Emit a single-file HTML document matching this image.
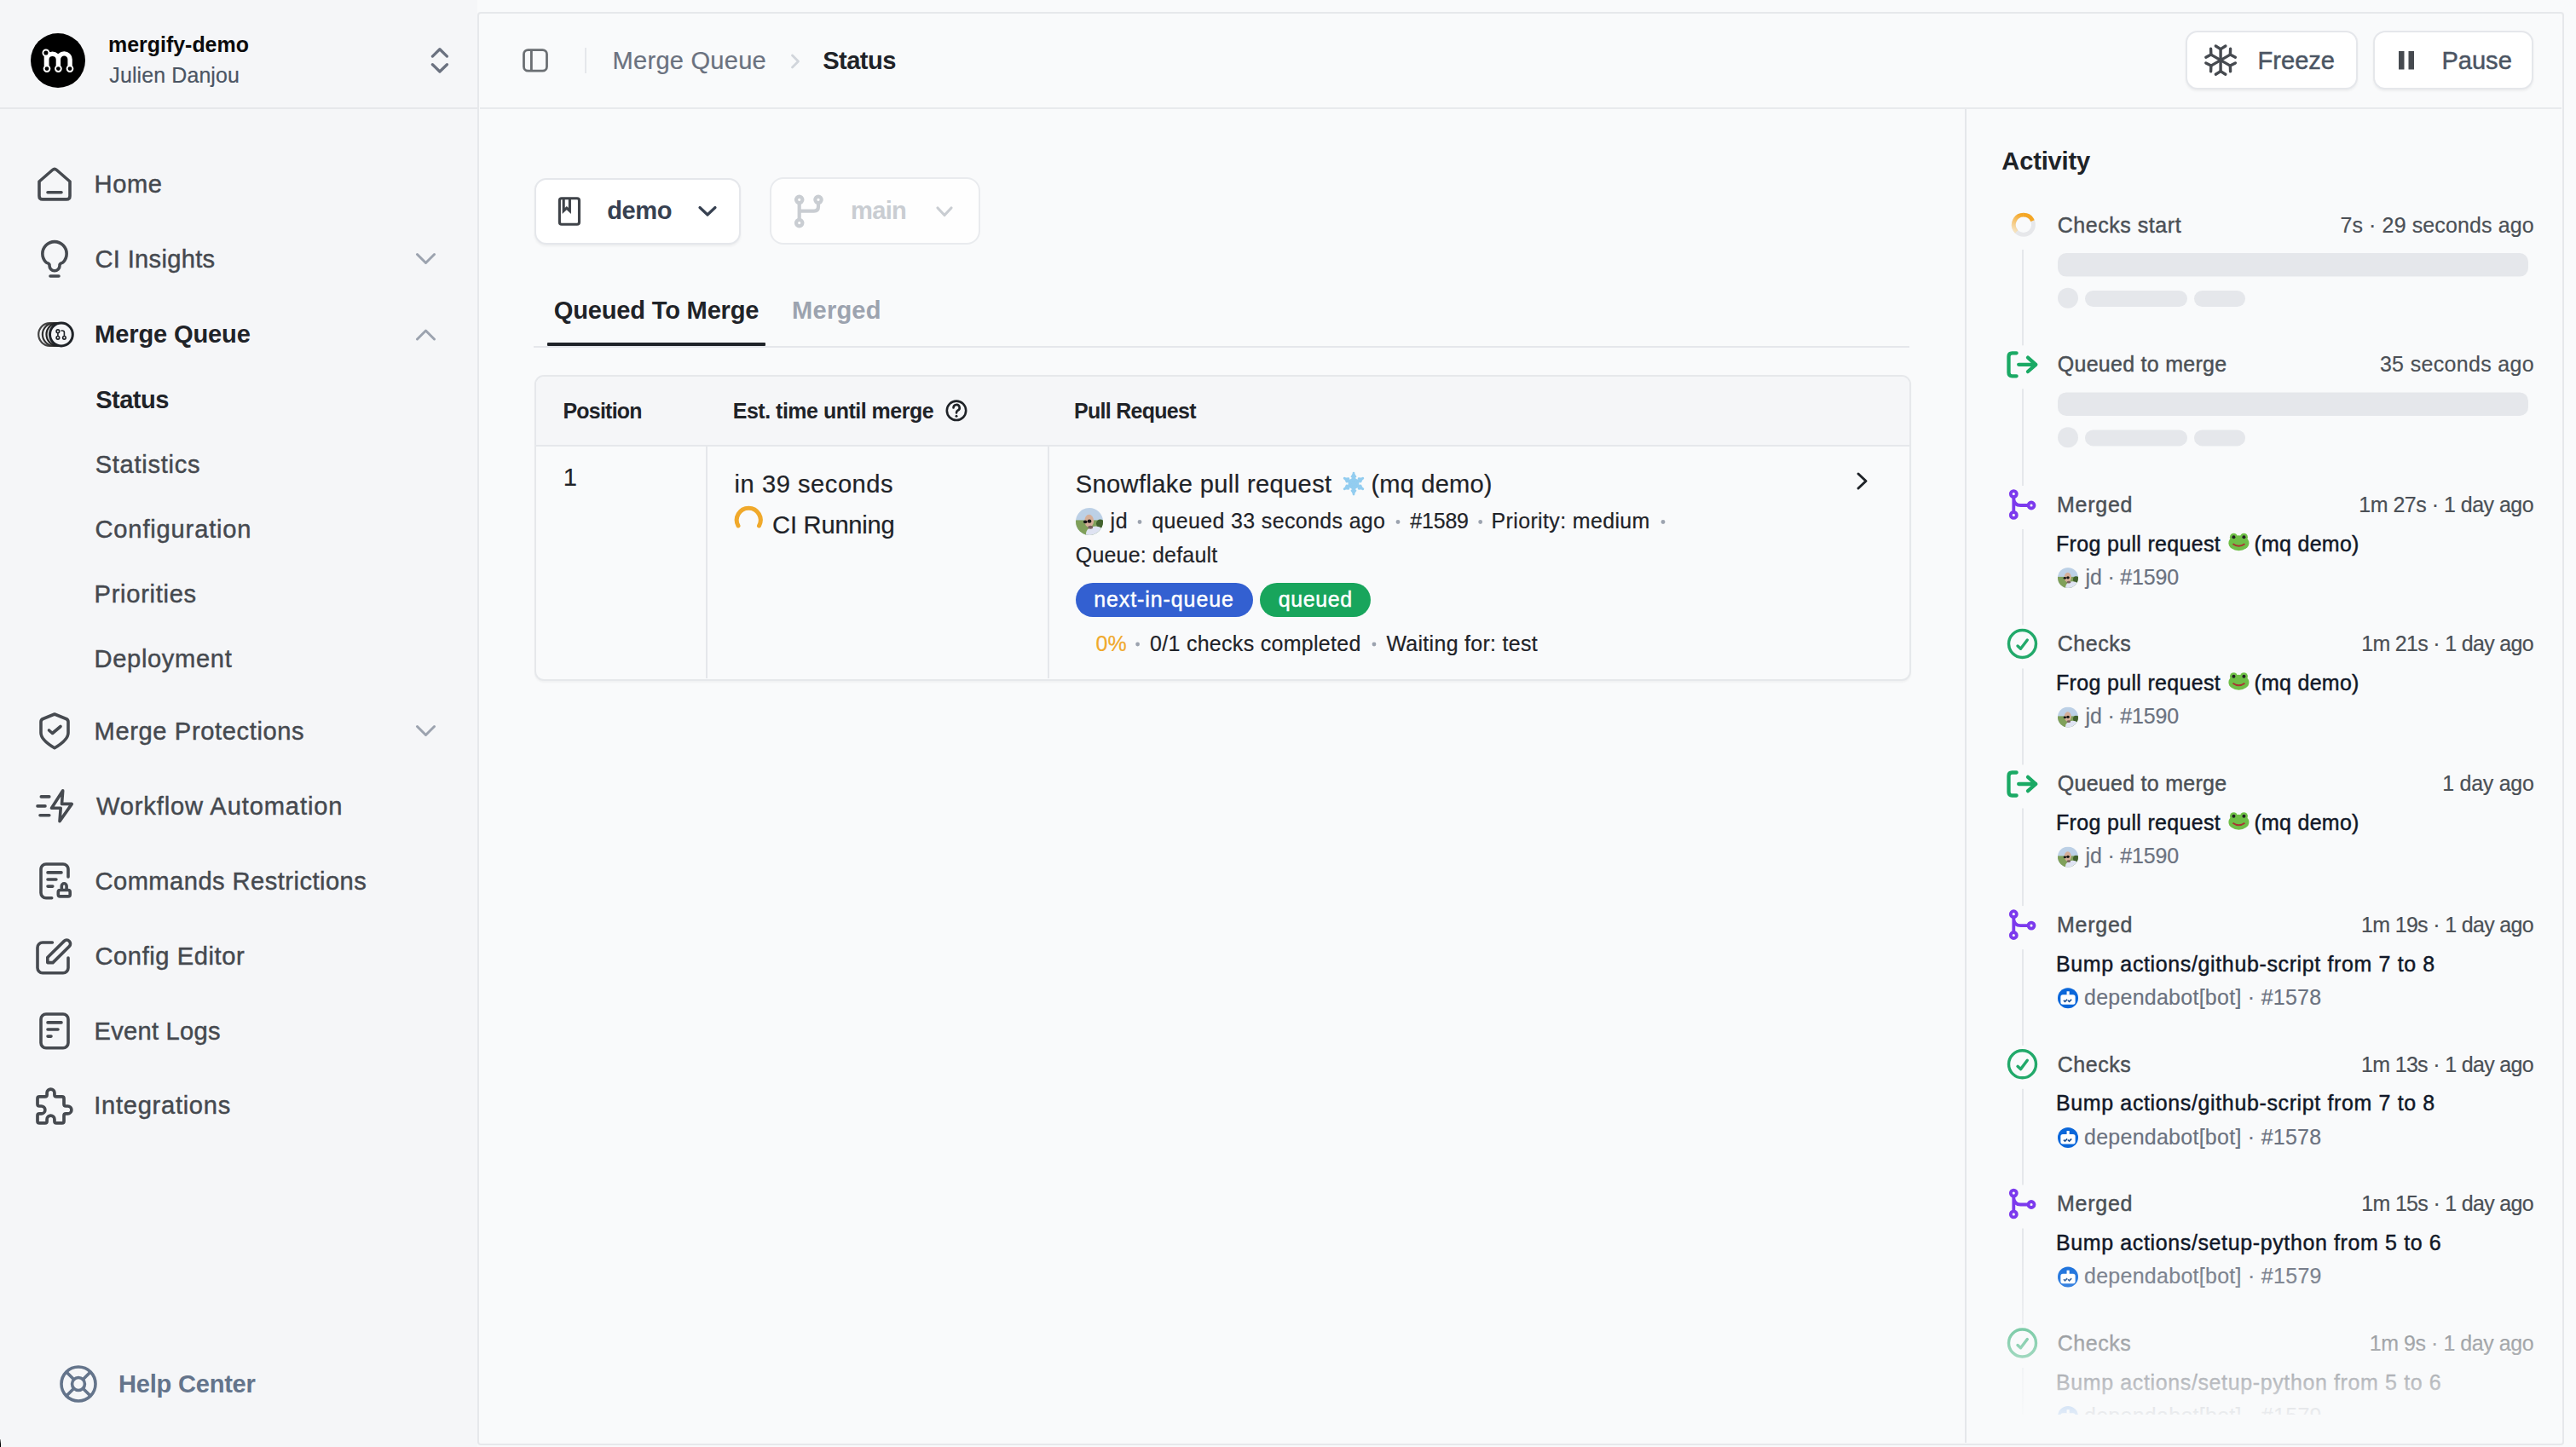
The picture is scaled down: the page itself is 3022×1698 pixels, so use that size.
<!DOCTYPE html>
<html><head><meta charset="utf-8"><style>
html,body{margin:0;padding:0;width:3022px;height:1698px;overflow:hidden;background:#f9fafb;font-family:'Liberation Sans', sans-serif}
.t{position:absolute;white-space:nowrap;line-height:0}
</style></head><body>
<div style="position:absolute;left:0px;top:0px;width:560px;height:1698px;background:#f5f6f8"></div><svg style="position:absolute;left:36px;top:38.8px;overflow:visible" width="64" height="64" viewBox="36 38.8 64 64" >
<circle cx="68" cy="70.8" r="32" fill="#000"/>
<g transform="translate(36,38.8)" fill="none" stroke="#fff" stroke-linecap="round">
<path d="M18.75,37.5 V30.75 A6.83,6.83 0 0 1 32.4,30.75 V37.5 M32.4,30.75 A6.85,6.85 0 0 1 46.1,30.75 V37.5" stroke-width="5.4"/>
<path d="M18.4,26 V37.5" stroke-width="5.4"/>
<circle cx="17.9" cy="23" r="3.5" stroke-width="1.9" fill="#000"/>
<circle cx="19" cy="41.6" r="3.4" stroke-width="1.9" fill="#000"/>
<circle cx="32.4" cy="41.6" r="3.4" stroke-width="1.9" fill="#000"/>
<circle cx="46" cy="41.6" r="3.4" stroke-width="1.9" fill="#000"/>
</g></svg><svg style="position:absolute;left:500px;top:50px;overflow:visible" width="30" height="40" viewBox="500 50 30 40" ><path d="M507.4,66.1 L515.9,57.8 L524.4,66.1 M507.4,75.7 L515.9,84 L524.4,75.7" fill="none" stroke="#6b7280" stroke-width="3.3" stroke-linecap="round" stroke-linejoin="round"/></svg><div style="position:absolute;left:0px;top:126px;width:561px;height:2px;background:#e6e8eb"></div><svg style="position:absolute;left:0;top:0" width="561" height="1698" viewBox="0 0 561 1698"><path fill="none" stroke="#464a50" stroke-width="3.6" stroke-linecap="round" stroke-linejoin="round" d="M46,213 L61.5,199.5 Q64,197.3 66.5,199.5 L82,213 V229.9 Q82,233.9 78,233.9 H50 Q46,233.9 46,229.9 Z M56,225.8 H72"/><path fill="none" stroke="#464a50" stroke-width="3.6" stroke-linecap="round" stroke-linejoin="round" d="M58,311.7 V310.5 C58,309.5 56.5,308.8 54,307.8 A14.15,14.15 0 1 1 74,307.8 C71.5,308.8 70,309.5 70,310.5 V311.7 A6,6 0 0 1 58,311.7 Z M59,324 H69"/><circle cx="58.5" cy="392.5" r="13.3" fill="#f4f5f7" stroke="#444" stroke-width="2.2"/><circle cx="63.2" cy="392.5" r="13.3" fill="#f4f5f7" stroke="#333" stroke-width="2.2"/><circle cx="67.8" cy="392.5" r="13.3" fill="#f4f5f7" stroke="#222" stroke-width="2.2"/><circle cx="71.9" cy="392.5" r="13.4" fill="#f4f5f7" stroke="#1f2328" stroke-width="3"/><g fill="none" stroke="#1f2328" stroke-width="1.6"><circle cx="67.9" cy="388.7" r="1.8"/><circle cx="67.9" cy="396.3" r="1.8"/><circle cx="75.4" cy="396.3" r="1.8"/><path d="M67.9,390.5 V394.5 M75.4,394.5 V390 Q75.4,388 73,388 H71.5"/></g><path fill="none" stroke="#9ca3af" stroke-width="3" stroke-linecap="round" stroke-linejoin="round" d="M489.5,298.5 L499.5,308.5 L509.5,298.5"/><path fill="none" stroke="#9ca3af" stroke-width="3" stroke-linecap="round" stroke-linejoin="round" d="M489.5,398 L499.5,388 L509.5,398"/><path fill="none" stroke="#9ca3af" stroke-width="3" stroke-linecap="round" stroke-linejoin="round" d="M489.5,852.5 L499.5,862.5 L509.5,852.5"/><path fill="none" stroke="#464a50" stroke-width="3.6" stroke-linecap="round" stroke-linejoin="round" d="M64,838 L50.5,843.5 Q48,844.5 48,847 V860 C48,866 56,873 64,877.8 C72,873 80,866 80,860 V847 Q80,844.5 77.5,843.5 Z M57.5,857 L61.5,860.5 L71,852.5"/><path fill="none" stroke="#464a50" stroke-width="3.6" stroke-linecap="round" stroke-linejoin="round" d="M48.3,934.9 H57.8 M44,945.9 H53 M47,956.8 H57.8 M73.7,927.8 L60.5,948.3 H71.2 L70,963.7 L84.3,943.4 H72.5 Z"/><path fill="none" stroke="#464a50" stroke-width="3.6" stroke-linecap="round" stroke-linejoin="round" d="M80,1029 V1020 A6,6 0 0 0 74,1014 H54 A6,6 0 0 0 48,1020 V1047.8 A6,6 0 0 0 54,1053.8 H60.7 M56,1023.9 H72 M56,1032 H65.9 M56,1040.1 H61.8 M70.5,1044.5 H80 Q82.2,1044.5 82.2,1046.7 V1049.7 Q82.2,1051.9 80,1051.9 H70.5 Q68.3,1051.9 68.3,1049.7 V1046.7 Q68.3,1044.5 70.5,1044.5 Z M72.3,1044.5 V1039.7 A2.9,2.9 0 0 1 78.1,1039.7 V1044.5"/><path fill="none" stroke="#464a50" stroke-width="3.6" stroke-linecap="round" stroke-linejoin="round" d="M61.4,1106 H50 A6,6 0 0 0 44,1112 V1135.8 A6,6 0 0 0 50,1141.8 H74 A6,6 0 0 0 80,1135.8 V1124 M55.8,1129.6 V1123.5 L75.2,1104.4 A4.3,4.3 0 0 1 81.3,1110.5 L62,1129.6 Z"/><path fill="none" stroke="#464a50" stroke-width="3.6" stroke-linecap="round" stroke-linejoin="round" d="M54,1190 H74 A6,6 0 0 1 80,1196 V1223.8 A6,6 0 0 1 74,1229.8 H54 A6,6 0 0 1 48,1223.8 V1196 A6,6 0 0 1 54,1190 Z M56,1199.9 H72 M56,1208 H68 M56,1216.1 H60"/><g transform="translate(37.35,1271.4) scale(2.216)"><path fill="none" stroke="#464a50" stroke-width="1.67" stroke-linecap="round" stroke-linejoin="round" d="M4 7h3a1 1 0 0 0 1 -1v-1a2 2 0 0 1 4 0v1a1 1 0 0 0 1 1h3a1 1 0 0 1 1 1v3a1 1 0 0 0 1 1h1a2 2 0 0 1 0 4h-1a1 1 0 0 0 -1 1v3a1 1 0 0 1 -1 1h-3a1 1 0 0 1 -1 -1v-1a2 2 0 0 0 -4 0v1a1 1 0 0 1 -1 1h-3a1 1 0 0 1 -1 -1v-3a1 1 0 0 1 1 -1h1a2 2 0 0 0 0 -4h-1a1 1 0 0 1 -1 -1v-3a1 1 0 0 1 1 -1"/></g><g fill="none" stroke="#64748b" stroke-width="3.6"><circle cx="92" cy="1624" r="20"/><circle cx="92" cy="1624" r="7.45"/><path d="M77.9,1609.9 L86.7,1618.7 M106.1,1609.9 L97.3,1618.7 M77.9,1638.1 L86.7,1629.3 M106.1,1638.1 L97.3,1629.3"/></g></svg><div style="position:absolute;left:560px;top:14px;width:2448px;height:1682px;box-sizing:border-box;border:2px solid #e6e8eb;border-radius:4px;background:#f9fafb"></div><div style="position:absolute;left:563px;top:126px;width:2442px;height:2px;background:#e8eaed"></div><svg style="position:absolute;left:600px;top:40px;overflow:visible" width="60" height="60" viewBox="600 40 60 60" ><g fill="none" stroke="#6b6f73" stroke-width="2.8"><rect x="614.5" y="58.6" width="27" height="24.6" rx="5"/><path d="M623.4,58.6 V83.2"/></g></svg><div style="position:absolute;left:686px;top:56px;width:2px;height:30px;background:#e5e7eb"></div><svg style="position:absolute;left:920px;top:60px;overflow:visible" width="30" height="30" viewBox="920 60 30 30" ><path d="M929.5,65 L936.5,72 L929.5,79" fill="none" stroke="#d1d5db" stroke-width="2.8" stroke-linecap="round" stroke-linejoin="round"/></svg><div style="position:absolute;left:2564px;top:36px;width:202px;height:69px;box-sizing:border-box;background:#fff;border:2px solid #e5e7eb;border-radius:14px;box-shadow:0 2px 3px rgba(0,0,0,0.05)"></div><div style="position:absolute;left:2784px;top:36px;width:188px;height:69px;box-sizing:border-box;background:#fff;border:2px solid #e5e7eb;border-radius:14px;box-shadow:0 2px 3px rgba(0,0,0,0.05)"></div><svg style="position:absolute;left:0;top:0" width="3022" height="130"><g fill="none" stroke="#464a50" stroke-width="3.4" stroke-linecap="round" stroke-linejoin="round"><path d="M2605.10,70.60 L2605.10,57.60"/><path d="M2599.33,54.00 L2605.10,57.60 L2610.87,54.00"/><path d="M2605.10,70.60 L2593.84,64.10"/><path d="M2587.84,67.29 L2593.84,64.10 L2593.60,57.30"/><path d="M2605.10,70.60 L2593.84,77.10"/><path d="M2593.60,83.90 L2593.84,77.10 L2587.84,73.91"/><path d="M2605.10,70.60 L2605.10,83.60"/><path d="M2610.87,87.20 L2605.10,83.60 L2599.33,87.20"/><path d="M2605.10,70.60 L2616.36,77.10"/><path d="M2622.36,73.91 L2616.36,77.10 L2616.60,83.90"/><path d="M2605.10,70.60 L2616.36,64.10"/><path d="M2616.60,57.30 L2616.36,64.10 L2622.36,67.29"/></g><rect x="2814" y="60" width="6.5" height="21.5" fill="#464a50"/><rect x="2825.5" y="60" width="6.5" height="21.5" fill="#464a50"/></svg><div style="position:absolute;left:626.5px;top:208.5px;width:242px;height:78.5px;box-sizing:border-box;background:#fff;border:2px solid #e5e7eb;border-radius:14px;box-shadow:0 2px 3px rgba(0,0,0,0.05)"></div><div style="position:absolute;left:902.5px;top:208px;width:247px;height:79px;box-sizing:border-box;background:#fefefe;border:2px solid #e9ebee;border-radius:16px"></div><svg style="position:absolute;left:0;top:0" width="1200" height="300"><g fill="none" stroke="#3f4349" stroke-width="3.1"><rect x="656.4" y="232.8" width="23.1" height="30.4" rx="2.5"/><path d="M661.2,233 V247.5 L664.8,244.2 L668.4,247.5 V233" stroke-linejoin="miter"/></g><path d="M821,243.5 L830,252 L839,243.5" fill="none" stroke="#374151" stroke-width="3.2" stroke-linecap="round" stroke-linejoin="round"/><g fill="none" stroke="#c9cdd2" stroke-width="4.2" stroke-linecap="round"><circle cx="937.7" cy="234.3" r="3.7"/><circle cx="960" cy="234.3" r="3.7"/><circle cx="937.7" cy="261.6" r="3.7"/><path d="M937.7,238 V258 M960,238 V242.5 Q960,247.6 955,247.6 H937.7"/></g><path d="M1100,244 L1108,252.5 L1116,244" fill="none" stroke="#c9cdd2" stroke-width="3.2" stroke-linecap="round" stroke-linejoin="round"/></svg><div style="position:absolute;left:626px;top:406px;width:1614px;height:2px;background:#e5e7eb"></div><div style="position:absolute;left:642px;top:401.5px;width:256px;height:4.5px;background:#1f2328;border-radius:1px"></div><div style="position:absolute;left:626.5px;top:440px;width:1615.5px;height:358.5px;box-sizing:border-box;border:2px solid #e6e8eb;border-radius:11px;overflow:hidden;background:#f9fafb;box-shadow:0 1.5px 2px rgba(0,0,0,0.035)"></div><div style="position:absolute;left:628.5px;top:442px;width:1611.5px;height:80px;background:#f5f6f8;border-radius:9px 9px 0 0"></div><div style="position:absolute;left:628.5px;top:522px;width:1611.5px;height:2px;background:#e6e8eb"></div><div style="position:absolute;left:828px;top:524px;width:2px;height:272px;background:#e5e7eb"></div><div style="position:absolute;left:1229px;top:524px;width:2px;height:272px;background:#e5e7eb"></div><svg style="position:absolute;left:1105px;top:465px;overflow:visible" width="34" height="34" viewBox="1105 465 34 34" ><g fill="none" stroke="#1f2328" stroke-width="2.6" stroke-linecap="round"><circle cx="1122" cy="481.8" r="11.2"/><path d="M1118.5,478.5 A3.6,3.6 0 1 1 1123.5,481.8 Q1122,482.5 1122,484.5"/></g><circle cx="1122" cy="488.2" r="1.5" fill="#1f2328"/></svg><svg style="position:absolute;left:855px;top:590px;overflow:visible" width="45" height="40" viewBox="855 590 45 40" ><path d="M866,617 A14,14 0 1 1 890.5,617" fill="none" stroke="#f0a92b" stroke-width="5" stroke-linecap="round"/></svg><svg style="position:absolute;left:0;top:0;overflow:visible" width="3022" height="1698"><circle cx="1588" cy="567.5" r="3.75" fill="#7fbfea"/><g fill="none" stroke="#93cdf0" stroke-width="2.75" stroke-linecap="round"><path d="M1588.00,555.00 L1588.00,580.00"/><path d="M1577.17,561.25 L1598.83,573.75"/><path d="M1577.17,573.75 L1598.83,561.25"/><path d="M1588.00,560.62 L1590.81,563.98"/><path d="M1588.00,560.62 L1585.19,563.98"/><path d="M1588.00,556.88 L1590.01,559.27"/><path d="M1588.00,556.88 L1585.99,559.27"/><path d="M1582.05,564.06 L1586.35,563.30"/><path d="M1582.05,564.06 L1583.54,568.17"/><path d="M1578.80,562.19 L1581.88,561.64"/><path d="M1578.80,562.19 L1579.87,565.12"/><path d="M1582.05,570.94 L1583.54,566.83"/><path d="M1582.05,570.94 L1586.35,571.70"/><path d="M1578.80,572.81 L1579.87,569.88"/><path d="M1578.80,572.81 L1581.88,573.36"/><path d="M1588.00,574.38 L1585.19,571.02"/><path d="M1588.00,574.38 L1590.81,571.02"/><path d="M1588.00,578.12 L1585.99,575.73"/><path d="M1588.00,578.12 L1590.01,575.73"/><path d="M1593.95,570.94 L1589.65,571.70"/><path d="M1593.95,570.94 L1592.46,566.83"/><path d="M1597.20,572.81 L1594.12,573.36"/><path d="M1597.20,572.81 L1596.13,569.88"/><path d="M1593.95,564.06 L1592.46,568.17"/><path d="M1593.95,564.06 L1589.65,563.30"/><path d="M1597.20,562.19 L1596.13,565.12"/><path d="M1597.20,562.19 L1594.12,561.64"/></g><defs><clipPath id="avpr"><circle cx="1278" cy="612" r="16"/></clipPath></defs><g clip-path="url(#avpr)"><rect x="1262" y="596" width="32" height="32" fill="#bcd0e6"/><rect x="1262" y="610.40" width="32" height="17.60" fill="#80a05a"/><ellipse cx="1290.80" cy="614.40" rx="4.80" ry="4.80" fill="#42622e"/><ellipse cx="1285.20" cy="626.40" rx="11.20" ry="8.80" fill="#dfe3f2"/><ellipse cx="1277.68" cy="611.20" rx="5.44" ry="7.52" fill="#d5ae98"/><ellipse cx="1279.28" cy="618.72" rx="2.88" ry="1.92" fill="#7a6060"/><ellipse cx="1273.20" cy="612.32" rx="2.24" ry="1.92" fill="#161616"/><ellipse cx="1278.00" cy="611.68" rx="2.40" ry="2.08" fill="#161616"/></g><circle cx="1337" cy="612.5" r="2.4" fill="#9ca3af"/><circle cx="1640" cy="612.5" r="2.4" fill="#9ca3af"/><circle cx="1736.7" cy="612.5" r="2.4" fill="#9ca3af"/><circle cx="1951" cy="612.5" r="2.4" fill="#9ca3af"/><circle cx="1334.6" cy="756" r="2.4" fill="#9ca3af"/><circle cx="1612" cy="756" r="2.4" fill="#9ca3af"/><path d="M2180,556 L2189,564.5 L2180,573" fill="none" stroke="#1f2328" stroke-width="3" stroke-linecap="round" stroke-linejoin="round"/></svg><div style="position:absolute;left:1262px;top:684px;width:208px;height:40px;background:#3360d1;border-radius:20px"></div><div style="position:absolute;left:1478px;top:684px;width:130px;height:40px;background:#18a55c;border-radius:20px"></div><div style="position:absolute;left:2305px;top:128px;width:2px;height:1565px;background:#e5e7eb"></div><svg style="position:absolute;left:0;top:0;overflow:visible" width="3022" height="1698"><defs><linearGradient id="spg" x1="0" y1="0" x2="0" y2="1"><stop offset="0" stop-color="#f0a92b"/><stop offset="1" stop-color="#e5e7eb"/></linearGradient></defs><linearGradient id="spg2" gradientUnits="userSpaceOnUse" x1="2361.9" y1="269.8" x2="2371.9" y2="251.8"><stop offset="0" stop-color="#f6e2bd"/><stop offset="1" stop-color="#f5a623"/></linearGradient><circle cx="2373.9" cy="263.8" r="11.6" fill="none" stroke="#e6e7ea" stroke-width="4.8"/><path d="M2365.7000000000003,272.0 A11.6,11.6 0 0 1 2373.9,252.20000000000002" fill="none" stroke="url(#spg2)" stroke-width="4.8"/><path d="M2373.9,252.20000000000002 A11.6,11.6 0 0 1 2384.5,259.1" fill="none" stroke="#f5a623" stroke-width="4.8"/><rect x="2372.0" y="292.9" width="2" height="112.40000000000003" fill="#e5e7eb"/><rect x="2414" y="297.0" width="552" height="27.6" rx="10" fill="#e5e7eb"/><circle cx="2426" cy="349.79999999999995" r="12" fill="#e5e7eb"/><rect x="2446" y="341.0" width="120" height="19" rx="9.5" fill="#e5e7eb"/><rect x="2574" y="341.0" width="60" height="19" rx="9.5" fill="#e5e7eb"/><g fill="none" stroke="#1aa964" stroke-width="4.3" stroke-linecap="round" stroke-linejoin="round"><path d="M2365.6,414.3 H2360.5 Q2356.5,414.3 2356.5,418.3 V437.3 Q2356.5,441.3 2360.5,441.3 H2365.6 M2368.2,427.8 H2388.3 M2379.0,419.6 L2388.3,427.8 L2379.0,436.0"/></g><rect x="2372.0" y="456.3" width="2" height="113.69999999999999" fill="#e5e7eb"/><rect x="2414" y="460.40000000000003" width="552" height="27.6" rx="10" fill="#e5e7eb"/><circle cx="2426" cy="513.2" r="12" fill="#e5e7eb"/><rect x="2446" y="504.4" width="120" height="19" rx="9.5" fill="#e5e7eb"/><rect x="2574" y="504.4" width="60" height="19" rx="9.5" fill="#e5e7eb"/><g fill="none" stroke="#7c3aed" stroke-width="3.8" stroke-linecap="round"><circle cx="2362.3" cy="579.6" r="3.5"/><circle cx="2362.3" cy="604.4" r="3.5"/><circle cx="2383.0" cy="593.0" r="3.5"/><path d="M2362.3,583.1 V600.9 M2362.3,585.5 Q2363.0,593.0 2370.5,593.0 H2379.5"/></g><rect x="2372.0" y="621.0" width="2" height="112.5" fill="#e5e7eb"/><defs><clipPath id="ava2"><circle cx="2426" cy="678.1" r="12"/></clipPath></defs><g clip-path="url(#ava2)"><rect x="2414" y="666.1" width="24" height="24" fill="#bcd0e6"/><rect x="2414" y="676.90" width="24" height="13.20" fill="#80a05a"/><ellipse cx="2435.60" cy="679.90" rx="3.60" ry="3.60" fill="#42622e"/><ellipse cx="2431.40" cy="688.90" rx="8.40" ry="6.60" fill="#dfe3f2"/><ellipse cx="2425.76" cy="677.50" rx="4.08" ry="5.64" fill="#d5ae98"/><ellipse cx="2426.96" cy="683.14" rx="2.16" ry="1.44" fill="#7a6060"/><ellipse cx="2422.40" cy="678.34" rx="1.68" ry="1.44" fill="#161616"/><ellipse cx="2426.00" cy="677.86" rx="1.80" ry="1.56" fill="#161616"/></g><g fill="none" stroke="#22a96a" stroke-width="3.4" stroke-linecap="round" stroke-linejoin="round"><circle cx="2372.5" cy="755.5" r="16"/><path d="M2367.0,758.0 L2370.5,761.3 L2378.3,751.0"/></g><rect x="2372.0" y="784.5" width="2" height="113.0" fill="#e5e7eb"/><defs><clipPath id="ava3"><circle cx="2426" cy="841.6" r="12"/></clipPath></defs><g clip-path="url(#ava3)"><rect x="2414" y="829.6" width="24" height="24" fill="#bcd0e6"/><rect x="2414" y="840.40" width="24" height="13.20" fill="#80a05a"/><ellipse cx="2435.60" cy="843.40" rx="3.60" ry="3.60" fill="#42622e"/><ellipse cx="2431.40" cy="852.40" rx="8.40" ry="6.60" fill="#dfe3f2"/><ellipse cx="2425.76" cy="841.00" rx="4.08" ry="5.64" fill="#d5ae98"/><ellipse cx="2426.96" cy="846.64" rx="2.16" ry="1.44" fill="#7a6060"/><ellipse cx="2422.40" cy="841.84" rx="1.68" ry="1.44" fill="#161616"/><ellipse cx="2426.00" cy="841.36" rx="1.80" ry="1.56" fill="#161616"/></g><g fill="none" stroke="#1aa964" stroke-width="4.3" stroke-linecap="round" stroke-linejoin="round"><path d="M2365.6,906.5 H2360.5 Q2356.5,906.5 2356.5,910.5 V929.5 Q2356.5,933.5 2360.5,933.5 H2365.6 M2368.2,920.0 H2388.3 M2379.0,911.8 L2388.3,920.0 L2379.0,928.2"/></g><rect x="2372.0" y="948.5" width="2" height="114.59999999999991" fill="#e5e7eb"/><defs><clipPath id="ava4"><circle cx="2426" cy="1005.6" r="12"/></clipPath></defs><g clip-path="url(#ava4)"><rect x="2414" y="993.6" width="24" height="24" fill="#bcd0e6"/><rect x="2414" y="1004.40" width="24" height="13.20" fill="#80a05a"/><ellipse cx="2435.60" cy="1007.40" rx="3.60" ry="3.60" fill="#42622e"/><ellipse cx="2431.40" cy="1016.40" rx="8.40" ry="6.60" fill="#dfe3f2"/><ellipse cx="2425.76" cy="1005.00" rx="4.08" ry="5.64" fill="#d5ae98"/><ellipse cx="2426.96" cy="1010.64" rx="2.16" ry="1.44" fill="#7a6060"/><ellipse cx="2422.40" cy="1005.84" rx="1.68" ry="1.44" fill="#161616"/><ellipse cx="2426.00" cy="1005.36" rx="1.80" ry="1.56" fill="#161616"/></g><g fill="none" stroke="#7c3aed" stroke-width="3.8" stroke-linecap="round"><circle cx="2362.3" cy="1072.6999999999998" r="3.5"/><circle cx="2362.3" cy="1097.5" r="3.5"/><circle cx="2383.0" cy="1086.1" r="3.5"/><path d="M2362.3,1076.1999999999998 V1094.0 M2362.3,1078.6 Q2363.0,1086.1 2370.5,1086.1 H2379.5"/></g><rect x="2372.0" y="1114.1" width="2" height="112.70000000000005" fill="#e5e7eb"/><circle cx="2426" cy="1171.1999999999998" r="12" fill="#0b67da"/><rect x="2417.36" y="1167.36" width="17.28" height="11.40" rx="2.64" fill="#fff"/><rect x="2424.56" y="1163.28" width="3.12" height="4.32" fill="#fff"/><path d="M2420.96,1173.84 l1.56,1.56 l2.64,-2.64 M2426.00,1173.84 l1.56,1.56 l2.64,-2.64" fill="none" stroke="#1d4f91" stroke-width="1.68"/><g fill="none" stroke="#22a96a" stroke-width="3.4" stroke-linecap="round" stroke-linejoin="round"><circle cx="2372.5" cy="1248.8" r="16"/><path d="M2367.0,1251.3 L2370.5,1254.6 L2378.3,1244.3"/></g><rect x="2372.0" y="1277.8" width="2" height="112.70000000000005" fill="#e5e7eb"/><circle cx="2426" cy="1334.8999999999999" r="12" fill="#0b67da"/><rect x="2417.36" y="1331.06" width="17.28" height="11.40" rx="2.64" fill="#fff"/><rect x="2424.56" y="1326.98" width="3.12" height="4.32" fill="#fff"/><path d="M2420.96,1337.54 l1.56,1.56 l2.64,-2.64 M2426.00,1337.54 l1.56,1.56 l2.64,-2.64" fill="none" stroke="#1d4f91" stroke-width="1.68"/><g fill="none" stroke="#7c3aed" stroke-width="3.8" stroke-linecap="round"><circle cx="2362.3" cy="1400.1" r="3.5"/><circle cx="2362.3" cy="1424.9" r="3.5"/><circle cx="2383.0" cy="1413.5" r="3.5"/><path d="M2362.3,1403.6 V1421.4 M2362.3,1406.0 Q2363.0,1413.5 2370.5,1413.5 H2379.5"/></g><rect x="2372.0" y="1441.5" width="2" height="112.5" fill="#e5e7eb"/><circle cx="2426" cy="1498.6" r="12" fill="#0b67da"/><rect x="2417.36" y="1494.76" width="17.28" height="11.40" rx="2.64" fill="#fff"/><rect x="2424.56" y="1490.68" width="3.12" height="4.32" fill="#fff"/><path d="M2420.96,1501.24 l1.56,1.56 l2.64,-2.64 M2426.00,1501.24 l1.56,1.56 l2.64,-2.64" fill="none" stroke="#1d4f91" stroke-width="1.68"/><g fill="none" stroke="#22a96a" stroke-width="3.4" stroke-linecap="round" stroke-linejoin="round"><circle cx="2372.5" cy="1576.0" r="16"/><path d="M2367.0,1578.5 L2370.5,1581.8 L2378.3,1571.5"/></g><rect x="2372.0" y="1605.0" width="2" height="63.0" fill="#e5e7eb"/><circle cx="2426" cy="1662.1" r="12" fill="#0b67da"/><rect x="2417.36" y="1658.26" width="17.28" height="11.40" rx="2.64" fill="#fff"/><rect x="2424.56" y="1654.18" width="3.12" height="4.32" fill="#fff"/><path d="M2420.96,1664.74 l1.56,1.56 l2.64,-2.64 M2426.00,1664.74 l1.56,1.56 l2.64,-2.64" fill="none" stroke="#1d4f91" stroke-width="1.68"/></svg><svg style="position:absolute;left:0px;top:0px;overflow:visible" width="10" height="10" viewBox="0 0 10 10" ><g transform="translate(2614.427860696517,624.2)"><ellipse cx="12" cy="13" rx="12" ry="9" fill="#6fbf47"/><circle cx="6" cy="6" r="4.5" fill="#6fbf47"/><circle cx="18" cy="6" r="4.5" fill="#6fbf47"/><circle cx="6" cy="6" r="2" fill="#222"/><circle cx="18" cy="6" r="2" fill="#222"/><path d="M5,14 Q12,19 19,14" stroke="#a33" stroke-width="2" fill="none"/></g></svg><svg style="position:absolute;left:0px;top:0px;overflow:visible" width="10" height="10" viewBox="0 0 10 10" ><g transform="translate(2614.427860696517,787.7)"><ellipse cx="12" cy="13" rx="12" ry="9" fill="#6fbf47"/><circle cx="6" cy="6" r="4.5" fill="#6fbf47"/><circle cx="18" cy="6" r="4.5" fill="#6fbf47"/><circle cx="6" cy="6" r="2" fill="#222"/><circle cx="18" cy="6" r="2" fill="#222"/><path d="M5,14 Q12,19 19,14" stroke="#a33" stroke-width="2" fill="none"/></g></svg><svg style="position:absolute;left:0px;top:0px;overflow:visible" width="10" height="10" viewBox="0 0 10 10" ><g transform="translate(2614.427860696517,951.7)"><ellipse cx="12" cy="13" rx="12" ry="9" fill="#6fbf47"/><circle cx="6" cy="6" r="4.5" fill="#6fbf47"/><circle cx="18" cy="6" r="4.5" fill="#6fbf47"/><circle cx="6" cy="6" r="2" fill="#222"/><circle cx="18" cy="6" r="2" fill="#222"/><path d="M5,14 Q12,19 19,14" stroke="#a33" stroke-width="2" fill="none"/></g></svg>
<div class="t" style="left:127.1px;top:52.25px;font-size:24.96px;color:#0b0b0c;font-weight:700;letter-spacing:-0.018px;">mergify-demo</div><div class="t" style="left:128.3px;top:88.15px;font-size:24.96px;color:#4b5563;letter-spacing:0.117px;-webkit-text-stroke:0.2px currentColor;">Julien Danjou</div><div class="t" style="left:110.6px;top:215.90px;font-size:29.12px;color:#45494f;letter-spacing:0.567px;-webkit-text-stroke:0.45px currentColor;">Home</div><div class="t" style="left:111.5px;top:303.90px;font-size:29.12px;color:#45494f;letter-spacing:0.310px;-webkit-text-stroke:0.45px currentColor;">CI Insights</div><div class="t" style="left:111.1px;top:391.60px;font-size:29.12px;color:#1f2328;font-weight:700;letter-spacing:-0.160px;">Merge Queue</div><div class="t" style="left:110.6px;top:857.60px;font-size:29.12px;color:#45494f;letter-spacing:0.613px;-webkit-text-stroke:0.45px currentColor;">Merge Protections</div><div class="t" style="left:112.9px;top:945.90px;font-size:29.12px;color:#45494f;letter-spacing:0.872px;-webkit-text-stroke:0.45px currentColor;">Workflow Automation</div><div class="t" style="left:111.5px;top:1033.70px;font-size:29.12px;color:#45494f;letter-spacing:0.465px;-webkit-text-stroke:0.45px currentColor;">Commands Restrictions</div><div class="t" style="left:111.5px;top:1121.70px;font-size:29.12px;color:#45494f;letter-spacing:0.575px;-webkit-text-stroke:0.45px currentColor;">Config Editor</div><div class="t" style="left:110.6px;top:1209.90px;font-size:29.12px;color:#45494f;letter-spacing:0.244px;-webkit-text-stroke:0.45px currentColor;">Event Logs</div><div class="t" style="left:110.3px;top:1297.10px;font-size:29.12px;color:#45494f;letter-spacing:0.709px;-webkit-text-stroke:0.45px currentColor;">Integrations</div><div class="t" style="left:112.2px;top:468.90px;font-size:29.12px;color:#1f2328;font-weight:700;letter-spacing:-0.540px;">Status</div><div class="t" style="left:111.7px;top:545.40px;font-size:29.12px;color:#45494f;letter-spacing:0.711px;-webkit-text-stroke:0.45px currentColor;">Statistics</div><div class="t" style="left:111.5px;top:621.40px;font-size:29.12px;color:#45494f;letter-spacing:0.825px;-webkit-text-stroke:0.45px currentColor;">Configuration</div><div class="t" style="left:110.6px;top:696.90px;font-size:29.12px;color:#45494f;letter-spacing:0.700px;-webkit-text-stroke:0.45px currentColor;">Priorities</div><div class="t" style="left:110.6px;top:772.90px;font-size:29.12px;color:#45494f;letter-spacing:0.644px;-webkit-text-stroke:0.45px currentColor;">Deployment</div><div class="t" style="left:139.1px;top:1623.90px;font-size:29.12px;color:#64748b;font-weight:700;letter-spacing:-0.260px;">Help Center</div><div class="t" style="left:718.6px;top:71.40px;font-size:29.12px;color:#6b7280;letter-spacing:0.220px;-webkit-text-stroke:0.2px currentColor;">Merge Queue</div><div class="t" style="left:965.2px;top:71.40px;font-size:29.12px;color:#1f2328;font-weight:700;letter-spacing:-0.540px;">Status</div><div class="t" style="left:2648.6px;top:70.90px;font-size:29.12px;color:#4b5563;letter-spacing:-0.040px;-webkit-text-stroke:0.45px currentColor;">Freeze</div><div class="t" style="left:2864.4px;top:70.90px;font-size:29.12px;color:#4b5563;letter-spacing:-0.025px;-webkit-text-stroke:0.45px currentColor;">Pause</div><div class="t" style="left:712.3px;top:246.90px;font-size:29.12px;color:#374151;font-weight:700;letter-spacing:-0.467px;">demo</div><div class="t" style="left:998.1px;top:246.90px;font-size:29.12px;color:#c9cdd2;font-weight:700;letter-spacing:-0.733px;">main</div><div class="t" style="left:649.8px;top:364.20px;font-size:29.12px;color:#1f2328;font-weight:700;letter-spacing:-0.214px;">Queued To Merge</div><div class="t" style="left:929.1px;top:364.20px;font-size:29.12px;color:#9ca3af;font-weight:700;letter-spacing:0.180px;">Merged</div><div class="t" style="left:660.4px;top:481.75px;font-size:24.96px;color:#1f2328;font-weight:700;letter-spacing:-0.743px;">Position</div><div class="t" style="left:859.8px;top:481.75px;font-size:24.96px;color:#1f2328;font-weight:700;letter-spacing:-0.485px;">Est. time until merge</div><div class="t" style="left:1260.1px;top:481.75px;font-size:24.96px;color:#1f2328;font-weight:700;letter-spacing:-0.700px;">Pull Request</div><div class="t" style="left:660.8px;top:559.90px;font-size:29.12px;color:#1f2328;-webkit-text-stroke:0.2px currentColor;">1</div><div class="t" style="left:861.6px;top:567.70px;font-size:29.12px;color:#1f2328;letter-spacing:0.533px;-webkit-text-stroke:0.2px currentColor;">in 39 seconds</div><div class="t" style="left:906.1px;top:615.80px;font-size:29.12px;color:#1f2328;letter-spacing:-0.222px;-webkit-text-stroke:0.2px currentColor;">CI Running</div><div class="t" style="left:1261.7px;top:567.70px;font-size:29.12px;color:#1f2328;letter-spacing:0.362px;-webkit-text-stroke:0.2px currentColor;">Snowflake pull request</div><div class="t" style="left:1608.4px;top:567.70px;font-size:29.12px;color:#1f2328;letter-spacing:0.175px;-webkit-text-stroke:0.2px currentColor;">(mq demo)</div><div class="t" style="left:1302.6px;top:611.05px;font-size:24.96px;color:#1f2328;letter-spacing:0.500px;-webkit-text-stroke:0.2px currentColor;">jd</div><div class="t" style="left:1351.3px;top:611.05px;font-size:24.96px;color:#1f2328;letter-spacing:0.365px;-webkit-text-stroke:0.2px currentColor;">queued 33 seconds ago</div><div class="t" style="left:1654.3px;top:611.05px;font-size:24.96px;color:#1f2328;letter-spacing:-0.175px;-webkit-text-stroke:0.2px currentColor;">#1589</div><div class="t" style="left:1749.6px;top:611.05px;font-size:24.96px;color:#1f2328;letter-spacing:0.367px;-webkit-text-stroke:0.2px currentColor;">Priority: medium</div><div class="t" style="left:1261.8px;top:651.15px;font-size:24.96px;color:#1f2328;letter-spacing:0.208px;-webkit-text-stroke:0.2px currentColor;">Queue: default</div><div class="t" style="left:1283.2px;top:702.85px;font-size:24.96px;color:#fff;letter-spacing:0.925px;-webkit-text-stroke:0.45px currentColor;">next-in-queue</div><div class="t" style="left:1499.7px;top:702.85px;font-size:24.96px;color:#fff;letter-spacing:0.620px;-webkit-text-stroke:0.45px currentColor;">queued</div><div class="t" style="left:1285.4px;top:754.75px;font-size:24.96px;color:#f0a92b;letter-spacing:0.300px;-webkit-text-stroke:0.2px currentColor;">0%</div><div class="t" style="left:1349.0px;top:754.75px;font-size:24.96px;color:#1f2328;letter-spacing:0.316px;-webkit-text-stroke:0.2px currentColor;">0/1 checks completed</div><div class="t" style="left:1626.4px;top:754.75px;font-size:24.96px;color:#1f2328;letter-spacing:0.306px;-webkit-text-stroke:0.2px currentColor;">Waiting for: test</div><div class="t" style="left:2348.3px;top:188.90px;font-size:29.12px;color:#1f2328;font-weight:700;letter-spacing:-0.186px;">Activity</div><div class="t" style="left:2413.8px;top:263.75px;font-size:24.96px;color:#4b5056;letter-spacing:0.555px;-webkit-text-stroke:0.45px currentColor;">Checks start</div><div class="t" style="left:2745.4px;top:263.75px;font-size:24.96px;color:#4b5056;letter-spacing:0.139px;-webkit-text-stroke:0.2px currentColor;">7s · 29 seconds ago</div><div class="t" style="left:2413.8px;top:427.15px;font-size:24.96px;color:#4b5056;letter-spacing:0.293px;-webkit-text-stroke:0.45px currentColor;">Queued to merge</div><div class="t" style="left:2791.9px;top:427.15px;font-size:24.96px;color:#4b5056;letter-spacing:0.354px;-webkit-text-stroke:0.2px currentColor;">35 seconds ago</div><div class="t" style="left:2413.0px;top:591.85px;font-size:24.96px;color:#4b5056;letter-spacing:0.760px;-webkit-text-stroke:0.45px currentColor;">Merged</div><div class="t" style="left:2767.3px;top:591.85px;font-size:24.96px;color:#4b5056;letter-spacing:-0.488px;-webkit-text-stroke:0.2px currentColor;">1m 27s · 1 day ago</div><div class="t" style="left:2412.0px;top:637.55px;font-size:24.96px;color:#111827;letter-spacing:0.344px;-webkit-text-stroke:0.45px currentColor;">Frog pull request</div><div class="t" style="left:2644.4px;top:637.55px;font-size:24.96px;color:#111827;letter-spacing:0.300px;-webkit-text-stroke:0.45px currentColor;">(mq demo)</div><div class="t" style="left:2446.6px;top:676.85px;font-size:24.96px;color:#6b7280;letter-spacing:-0.167px;-webkit-text-stroke:0.2px currentColor;">jd · #1590</div><div class="t" style="left:2413.8px;top:755.35px;font-size:24.96px;color:#4b5056;letter-spacing:0.540px;-webkit-text-stroke:0.45px currentColor;">Checks</div><div class="t" style="left:2770.2px;top:755.35px;font-size:24.96px;color:#4b5056;letter-spacing:-0.659px;-webkit-text-stroke:0.2px currentColor;">1m 21s · 1 day ago</div><div class="t" style="left:2412.0px;top:801.05px;font-size:24.96px;color:#111827;letter-spacing:0.344px;-webkit-text-stroke:0.45px currentColor;">Frog pull request</div><div class="t" style="left:2644.4px;top:801.05px;font-size:24.96px;color:#111827;letter-spacing:0.300px;-webkit-text-stroke:0.45px currentColor;">(mq demo)</div><div class="t" style="left:2446.6px;top:840.35px;font-size:24.96px;color:#6b7280;letter-spacing:-0.167px;-webkit-text-stroke:0.2px currentColor;">jd · #1590</div><div class="t" style="left:2413.8px;top:919.35px;font-size:24.96px;color:#4b5056;letter-spacing:0.293px;-webkit-text-stroke:0.45px currentColor;">Queued to merge</div><div class="t" style="left:2865.2px;top:919.35px;font-size:24.96px;color:#4b5056;letter-spacing:-0.250px;-webkit-text-stroke:0.2px currentColor;">1 day ago</div><div class="t" style="left:2412.0px;top:965.05px;font-size:24.96px;color:#111827;letter-spacing:0.344px;-webkit-text-stroke:0.45px currentColor;">Frog pull request</div><div class="t" style="left:2644.4px;top:965.05px;font-size:24.96px;color:#111827;letter-spacing:0.300px;-webkit-text-stroke:0.45px currentColor;">(mq demo)</div><div class="t" style="left:2446.6px;top:1004.35px;font-size:24.96px;color:#6b7280;letter-spacing:-0.167px;-webkit-text-stroke:0.2px currentColor;">jd · #1590</div><div class="t" style="left:2413.0px;top:1084.95px;font-size:24.96px;color:#4b5056;letter-spacing:0.760px;-webkit-text-stroke:0.45px currentColor;">Merged</div><div class="t" style="left:2770.0px;top:1084.95px;font-size:24.96px;color:#4b5056;letter-spacing:-0.647px;-webkit-text-stroke:0.2px currentColor;">1m 19s · 1 day ago</div><div class="t" style="left:2412.0px;top:1130.65px;font-size:24.96px;color:#111827;letter-spacing:0.649px;-webkit-text-stroke:0.45px currentColor;">Bump actions/github-script from 7 to 8</div><div class="t" style="left:2445.0px;top:1169.95px;font-size:24.96px;color:#6b7280;letter-spacing:0.282px;-webkit-text-stroke:0.2px currentColor;">dependabot[bot] · #1578</div><div class="t" style="left:2413.8px;top:1248.65px;font-size:24.96px;color:#4b5056;letter-spacing:0.540px;-webkit-text-stroke:0.45px currentColor;">Checks</div><div class="t" style="left:2770.0px;top:1248.65px;font-size:24.96px;color:#4b5056;letter-spacing:-0.647px;-webkit-text-stroke:0.2px currentColor;">1m 13s · 1 day ago</div><div class="t" style="left:2412.0px;top:1294.35px;font-size:24.96px;color:#111827;letter-spacing:0.649px;-webkit-text-stroke:0.45px currentColor;">Bump actions/github-script from 7 to 8</div><div class="t" style="left:2445.0px;top:1333.65px;font-size:24.96px;color:#6b7280;letter-spacing:0.282px;-webkit-text-stroke:0.2px currentColor;">dependabot[bot] · #1578</div><div class="t" style="left:2413.0px;top:1412.35px;font-size:24.96px;color:#4b5056;letter-spacing:0.760px;-webkit-text-stroke:0.45px currentColor;">Merged</div><div class="t" style="left:2770.3px;top:1412.35px;font-size:24.96px;color:#4b5056;letter-spacing:-0.665px;-webkit-text-stroke:0.2px currentColor;">1m 15s · 1 day ago</div><div class="t" style="left:2412.0px;top:1458.05px;font-size:24.96px;color:#111827;letter-spacing:0.642px;-webkit-text-stroke:0.45px currentColor;">Bump actions/setup-python from 5 to 6</div><div class="t" style="left:2445.0px;top:1497.35px;font-size:24.96px;color:#6b7280;letter-spacing:0.295px;-webkit-text-stroke:0.2px currentColor;">dependabot[bot] · #1579</div><div class="t" style="left:2413.8px;top:1575.85px;font-size:24.96px;color:#4b5056;letter-spacing:0.540px;-webkit-text-stroke:0.45px currentColor;">Checks</div><div class="t" style="left:2779.7px;top:1575.85px;font-size:24.96px;color:#4b5056;letter-spacing:-0.425px;-webkit-text-stroke:0.2px currentColor;">1m 9s · 1 day ago</div><div class="t" style="left:2412.0px;top:1621.55px;font-size:24.96px;color:#111827;letter-spacing:0.642px;-webkit-text-stroke:0.45px currentColor;">Bump actions/setup-python from 5 to 6</div><div class="t" style="left:2445.0px;top:1660.85px;font-size:24.96px;color:#6b7280;letter-spacing:0.295px;-webkit-text-stroke:0.2px currentColor;">dependabot[bot] · #1579</div>
<div style="position:absolute;left:2307px;top:1470px;width:698px;height:190px;background:linear-gradient(rgba(249,250,251,0),rgba(249,250,251,0.9))"></div><div style="position:absolute;left:2307px;top:1660px;width:698px;height:33px;background:#f9fafb"></div><div style="position:absolute;left:0px;top:1689px;width:1.3px;height:9px;background:linear-gradient(rgba(0,0,0,0.3),#000 60%)"></div>
<script>(function(){var w=window.innerWidth;if(w>0&&Math.abs(w-3022)>2){document.documentElement.style.zoom=(w/3022);}})();</script>
</body></html>
